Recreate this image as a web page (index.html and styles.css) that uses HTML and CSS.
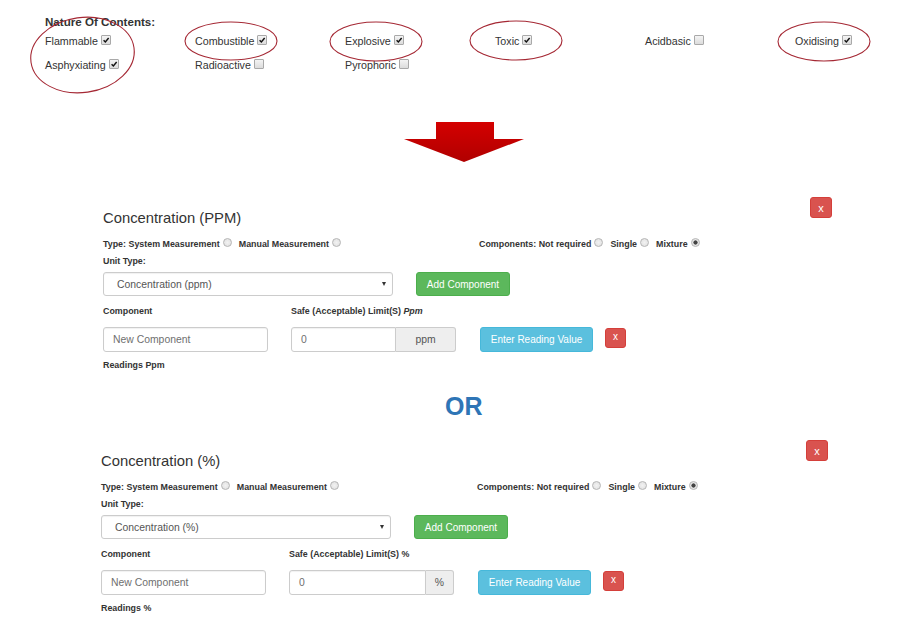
FILE: index.html
```html
<!DOCTYPE html>
<html lang="en">
<head>
<meta charset="utf-8">
<title>Nature Of Contents</title>
<link rel="stylesheet" href="styles.css">
</head>
<body>
<div class="top">
  <div class="nature">
    <div class="nature-title">Nature Of Contents:</div>
    <div class="nature-grid">
      <span class="chk-item">Flammable <span class="cb cb-on"><svg viewBox="0 0 10 10"><path d="M2 5.2 L4.2 7.4 L8.3 2.4" /></svg></span></span>
      <span class="chk-item">Combustible <span class="cb cb-on"><svg viewBox="0 0 10 10"><path d="M2 5.2 L4.2 7.4 L8.3 2.4" /></svg></span></span>
      <span class="chk-item">Explosive <span class="cb cb-on"><svg viewBox="0 0 10 10"><path d="M2 5.2 L4.2 7.4 L8.3 2.4" /></svg></span></span>
      <span class="chk-item">Toxic <span class="cb cb-on"><svg viewBox="0 0 10 10"><path d="M2 5.2 L4.2 7.4 L8.3 2.4" /></svg></span></span>
      <span class="chk-item">Acidbasic <span class="cb"></span></span>
      <span class="chk-item">Oxidising <span class="cb cb-on"><svg viewBox="0 0 10 10"><path d="M2 5.2 L4.2 7.4 L8.3 2.4" /></svg></span></span>
      <span class="chk-item">Asphyxiating <span class="cb cb-on"><svg viewBox="0 0 10 10"><path d="M2 5.2 L4.2 7.4 L8.3 2.4" /></svg></span></span>
      <span class="chk-item">Radioactive <span class="cb"></span></span>
      <span class="chk-item">Pyrophoric <span class="cb"></span></span>
    </div>
  </div>
  <svg class="marks" width="901" height="100" viewBox="0 0 901 100">
    <ellipse cx="82.5" cy="55" rx="52" ry="37.5" transform="rotate(-8 82.5 55)"/>
    <ellipse cx="231" cy="41" rx="46" ry="19"/>
    <ellipse cx="376" cy="41.5" rx="46" ry="19.5"/>
    <ellipse cx="516" cy="40.5" rx="46" ry="19.5"/>
    <ellipse cx="824" cy="41.5" rx="46" ry="19.5"/>
  </svg>
</div>

<div class="arrow">
  <svg width="122" height="42" viewBox="0 0 122 42">
    <defs>
      <linearGradient id="ag" x1="0" y1="0" x2="0" y2="1">
        <stop offset="0" stop-color="#d40000"/>
        <stop offset="1" stop-color="#b00000"/>
      </linearGradient>
    </defs>
    <polygon points="32,0 90,0 90,17 120,17 60,40 0,17 32,17" fill="url(#ag)"/>
  </svg>
</div>

<section class="panel">
  <div class="panel-head">
    <h4 class="panel-title">Concentration (PPM)</h4>
    <button class="btn btn-danger btn-close">x</button>
  </div>
  <div class="type-row">
    <div class="opt-group"><span>Type: System Measurement</span><span class="radio"></span><span>Manual Measurement</span><span class="radio"></span></div>
    <div class="opt-group"><span>Components: Not required</span><span class="radio"></span><span>Single</span><span class="radio"></span><span>Mixture</span><span class="radio radio-on"></span></div>
  </div>
  <div class="lbl-line">Unit Type:</div>
  <div class="unit-row">
    <div class="select"><span>Concentration (ppm)</span><span class="caret"></span></div>
    <button class="btn btn-success">Add Component</button>
  </div>
  <div class="comp-labels">
    <span>Component</span>
    <span>Safe (Acceptable) Limit(S) <em>Ppm</em></span>
  </div>
  <div class="comp-row">
    <div class="input">New Component</div>
    <div class="input-group"><div class="input grow">0</div><div class="addon addon-wide">ppm</div></div>
    <button class="btn btn-info">Enter Reading Value</button>
    <button class="btn btn-danger btn-x">x</button>
  </div>
  <div class="lbl-line lbl-readings">Readings Ppm</div>
</section>

<div class="or">OR</div>

<section class="panel panel-shift">
  <div class="panel-head">
    <h4 class="panel-title">Concentration (%)</h4>
    <button class="btn btn-danger btn-close">x</button>
  </div>
  <div class="type-row">
    <div class="opt-group"><span>Type: System Measurement</span><span class="radio"></span><span>Manual Measurement</span><span class="radio"></span></div>
    <div class="opt-group"><span>Components: Not required</span><span class="radio"></span><span>Single</span><span class="radio"></span><span>Mixture</span><span class="radio radio-on"></span></div>
  </div>
  <div class="lbl-line">Unit Type:</div>
  <div class="unit-row">
    <div class="select"><span>Concentration (%)</span><span class="caret"></span></div>
    <button class="btn btn-success">Add Component</button>
  </div>
  <div class="comp-labels">
    <span>Component</span>
    <span>Safe (Acceptable) Limit(S) %</span>
  </div>
  <div class="comp-row">
    <div class="input">New Component</div>
    <div class="input-group"><div class="input grow">0</div><div class="addon">%</div></div>
    <button class="btn btn-info">Enter Reading Value</button>
    <button class="btn btn-danger btn-x">x</button>
  </div>
  <div class="lbl-line lbl-readings">Readings %</div>
</section>
</body>
</html>
```

FILE: styles.css
```css
* { box-sizing: border-box; }

body {
  margin: 0;
  background: #fff;
  color: #333;
  font-family: "Liberation Sans", Arial, sans-serif;
  font-size: 10.5px;
}

/* ---------- top: nature of contents ---------- */
.top {
  position: relative;
  height: 78px;
}

.nature {
  padding-left: 45px;
  padding-top: 15px;
}

.nature-title {
  font-weight: bold;
  font-size: 11.6px;
  line-height: 14px;
}

.nature-grid {
  display: grid;
  grid-template-columns: repeat(6, 150px);
  grid-auto-rows: 24px;
  align-items: center;
}

.chk-item {
  display: flex;
  align-items: center;
  font-size: 10.7px;
  color: #333;
}

.cb {
  display: inline-block;
  width: 10px;
  height: 10px;
  margin-left: 3px;
  margin-top: -3px;
  border: 1px solid #a9a9a9;
  border-radius: 1px;
  background: linear-gradient(#f4f4f4, #dcdcdc);
}

.cb svg {
  display: block;
  width: 8px;
  height: 8px;
}

.cb svg path {
  fill: none;
  stroke: #111;
  stroke-width: 1.8;
}

.marks {
  position: absolute;
  left: 0;
  top: 0;
  pointer-events: none;
}

.marks ellipse {
  fill: none;
  stroke: #a52834;
  stroke-width: 1.1;
}

/* ---------- arrow ---------- */
.arrow {
  margin-top: 44px;
  margin-left: 404px;
  height: 42px;
}

.arrow svg { display: block; }

/* ---------- panels ---------- */
.panel {
  margin-left: 103px;
  width: 729px;
  margin-top: 33px;
}

.panel-shift {
  margin-left: 101px;
  width: 727px;
  margin-top: 19px;
}

.panel-head {
  display: flex;
  justify-content: space-between;
  align-items: flex-end;
  height: 30px;
}

.panel-title {
  margin: 0;
  font-weight: normal;
  font-size: 14.8px;
  line-height: 18px;
  color: #333;
}

.btn {
  border: 1px solid transparent;
  border-radius: 3px;
  color: #fff;
  font-family: "Liberation Sans", Arial, sans-serif;
  font-size: 10px;
  padding: 0 9px;
  cursor: pointer;
}

.btn-close {
  align-self: flex-start;
  width: 22px;
  height: 21px;
  padding: 0;
  font-size: 11px;
}

.btn-danger { background: #d9534f; border-color: #d43f3a; }
.btn-success { background: #5cb85c; border-color: #4cae4c; }
.btn-info { background: #5bc0de; border-color: #46b8da; }

.type-row {
  display: grid;
  grid-template-columns: 376px auto;
  margin-top: 9px;
  height: 16px;
  align-items: center;
}

.opt-group {
  display: flex;
  align-items: center;
  font-weight: bold;
  font-size: 8.9px;
  color: #333;
}

.radio {
  display: inline-block;
  width: 9px;
  height: 9px;
  margin: -3px 7px 0 3px;
  border: 1px solid #b5b5b5;
  border-radius: 50%;
  background: radial-gradient(circle, #f2f2f2 0, #dedede 100%);
}

.radio-on {
  background: radial-gradient(circle, #444 0, #444 1.8px, #e6e6e6 2.4px);
}

.lbl-line {
  font-weight: bold;
  font-size: 8.9px;
  line-height: 16px;
  height: 16px;
  margin-top: 1px;
}

.lbl-readings {
  margin-top: 5px;
}

.unit-row {
  display: flex;
  gap: 23px;
  margin-top: 3px;
  height: 24px;
}

.select {
  width: 290px;
  display: flex;
  align-items: center;
  justify-content: space-between;
  padding: 0 6px 0 13px;
  border: 1px solid #ccc;
  border-radius: 3px;
  color: #555;
  font-size: 10.4px;
  box-shadow: inset 0 1px 1px rgba(0,0,0,.06);
}

.caret {
  width: 0;
  height: 0;
  border-left: 2.5px solid transparent;
  border-right: 2.5px solid transparent;
  border-top: 4px solid #333;
}

.unit-row .btn {
  width: 94px;
  height: 24px;
  padding: 0;
}

.comp-labels {
  display: grid;
  grid-template-columns: 188px auto;
  margin-top: 7px;
  font-weight: bold;
  font-size: 8.9px;
  line-height: 16px;
}

.comp-labels em {
  font-style: italic;
}

.comp-row {
  display: flex;
  align-items: flex-start;
  margin-top: 8px;
  height: 25px;
}

.input {
  display: flex;
  align-items: center;
  width: 165px;
  height: 25px;
  padding: 0 9px;
  border: 1px solid #ccc;
  border-radius: 3px;
  color: #6f6f6f;
  font-size: 10.4px;
  box-shadow: inset 0 1px 1px rgba(0,0,0,.06);
}

.comp-row > .input {
  margin-right: 23px;
}

.input-group {
  display: flex;
  width: 165px;
  height: 25px;
}

.input.grow {
  flex: 1;
  width: auto;
  border-radius: 3px 0 0 3px;
}

.addon {
  display: flex;
  align-items: center;
  justify-content: center;
  padding: 0 9px;
  background: #eee;
  border: 1px solid #ccc;
  border-left: 0;
  border-radius: 0 3px 3px 0;
  color: #555;
  font-size: 10.4px;
}

.addon-wide {
  width: 60px;
}

.comp-row .btn-info {
  margin-left: 24px;
  width: 113px;
  height: 25px;
  padding: 0;
}

.btn-x {
  margin-left: 12px;
  margin-top: 1px;
  width: 21px;
  height: 20px;
  padding: 0 0 4px;
  font-size: 10px;
}

.or {
  margin-left: 445px;
  margin-top: 18px;
  font-weight: bold;
  font-size: 25px;
  line-height: 30px;
  color: #2e75b6;
}
```
